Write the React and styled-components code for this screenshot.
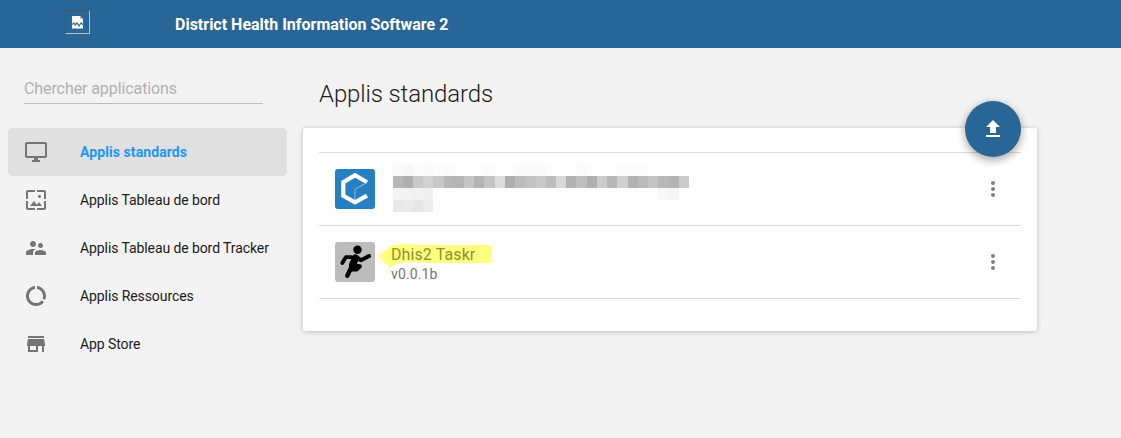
import React from "react";
import styled, { createGlobalStyle } from "styled-components";

const Global = createGlobalStyle`
  * { box-sizing: border-box; }
  body { margin: 0; background: #f3f3f3; font-family: Roboto, "Liberation Sans", sans-serif; color: #212121; }
`;

const Page = styled.div`
  height: 438px;
  overflow: hidden;
  background: #f3f3f3;
`;

const Header = styled.header`
  display: flex;
  height: 48px;
  background: #276696;
  padding-left: 65px;
`;

const Logo = styled.div`
  width: 25px;
  height: 24px;
  margin: 10px 85px 0 0;
  border: 1px solid;
  border-color: #54504e #b4bfc7 #b4bfc7 #54504e;
  svg { display: block; margin: 3px 0 0 4px; }
`;

const Title = styled.div`
  font-size: 16px;
  font-weight: 700;
  line-height: 49px;
  color: #fff;
`;

const Body = styled.div`
  display: flex;
`;

const Sidebar = styled.nav`
  width: 295px;
  padding: 28px 8px 0;
  flex: none;
`;

const Search = styled.input`
  display: block;
  width: 239px;
  height: 28px;
  margin: 0 0 24px 16px;
  padding: 0 0 3px;
  border: 0;
  border-bottom: 1px solid #bdbdbd;
  background: transparent;
  font: 16px Roboto, "Liberation Sans", sans-serif;
  letter-spacing: -0.09px;
  outline: 0;
  &::placeholder { color: #b0b0b0; opacity: 1; }
`;

const NavItem = styled.a`
  display: flex;
  align-items: center;
  gap: 32px;
  height: 48px;
  padding-left: 16px;
  border-radius: 5px;
  font-size: 14px;
  white-space: nowrap;
  font-weight: ${(p) => (p.$active ? 700 : 400)};
  letter-spacing: ${(p) => (p.$active ? "0.08px" : "-0.09px")};
  color: ${(p) => (p.$active ? "#2196f3" : "#212121")};
  background: ${(p) => (p.$active ? "#e0e0e0" : "transparent")};
`;

const Icon = styled.svg`
  display: block;
  width: 24px;
  height: 24px;
  flex: none;
  fill: ${(p) => p.$color || "#757575"};
`;

const Main = styled.main`
  width: 758px;
  padding: 0 16px 0 8px;
`;

const Heading = styled.h1`
  margin: 0;
  height: 80px;
  padding: 32px 0 0 16px;
  font-size: 24px;
  line-height: 29px;
  font-weight: 300;
  letter-spacing: -0.12px;
`;

const Card = styled.section`
  position: relative;
  height: 203px;
  padding: 24px 16px;
  background: #fff;
  border-radius: 2px;
  box-shadow: 0 1px 6px rgba(0, 0, 0, 0.12), 0 1px 4px rgba(0, 0, 0, 0.12);
`;

const UploadButton = styled.button`
  position: absolute;
  top: -27px;
  right: 16px;
  display: flex;
  align-items: center;
  justify-content: center;
  width: 56px;
  height: 56px;
  padding: 0;
  border: 0;
  border-radius: 50%;
  background: #276696;
  box-shadow: 0 3px 10px rgba(0, 0, 0, 0.16), 0 3px 10px rgba(0, 0, 0, 0.23);
`;

const AppList = styled.div`
  border-top: 1px solid #dcdcdc;
`;

const AppRow = styled.div`
  display: flex;
  align-items: center;
  height: 73px;
  padding: 0 16px;
  border-bottom: 1px solid #dcdcdc;
`;

const AppIcon = styled.svg`
  width: 40px;
  height: 40px;
  flex: none;
  border-radius: 3px;
  background: ${(p) => p.$bg};
`;

const AppText = styled.div`
  position: relative;
  flex: 1;
  padding: 4px 0 0 16px;
`;

const AppName = styled.div`
  position: relative;
  font-size: 16px;
  line-height: 19px;
  letter-spacing: 0.1px;
  color: #8f8f2d;
`;

const Version = styled.div`
  position: relative;
  font-size: 14px;
  line-height: 18px;
  letter-spacing: 0.12px;
  margin-top: 1px;
  color: #757575;
`;

const Marker = styled.svg`
  position: absolute;
  left: 2px;
  top: 3px;
  width: 116px;
  height: 26px;
`;

const MenuButton = styled.button`
  display: flex;
  justify-content: center;
  width: 24px;
  padding: 0;
  border: 0;
  background: none;
`;

const Redacted = styled.div`
  width: 326px;
  height: 50px;
  margin: 0 auto 2px 7px;
  padding: 1px 0 0 10.5px;
  background: #fdfdfd;
`;

const MosaicRow = styled.div`
  display: flex;
  height: 12px;
`;

const Cell = styled.span`
  width: 10.22px;
  flex: none;
  background: ${(p) => p.$c};
`;

const icons = {
  desktop: "M21 2H3c-1.1 0-2 .9-2 2v12c0 1.1.9 2 2 2h7v2H8v2h8v-2h-2v-2h7c1.1 0 2-.9 2-2V4c0-1.1-.9-2-2-2zm0 14H3V4h18v12z",
  wallpaper: "M4 4h7V2H4c-1.1 0-2 .9-2 2v7h2V4zm6 9l-4 5h12l-3-4-2.03 2.71L10 13zm7-4.5c0-.83-.67-1.5-1.5-1.5S14 7.67 14 8.5s.67 1.5 1.5 1.5S17 9.33 17 8.5zM20 2h-7v2h7v7h2V4c0-1.1-.9-2-2-2zm0 18h-7v2h7c1.1 0 2-.9 2-2v-7h-2v7zM4 13H2v7c0 1.1.9 2 2 2h7v-2H4v-7z",
  people: "M16.5 12c1.38 0 2.49-1.12 2.49-2.5S17.88 7 16.5 7C15.12 7 14 8.12 14 9.5s1.12 2.5 2.5 2.5zM9 11c1.66 0 2.99-1.34 2.99-3S10.66 5 9 5C7.34 5 6 6.34 6 8s1.34 3 3 3zm7.5 3c-1.83 0-5.5.92-5.5 2.75V19h11v-2.25c0-1.83-3.67-2.75-5.5-2.75zM9 13c-2.33 0-7 1.17-7 3.5V19h7v-2.25c0-.85.33-2.34 2.37-3.47C10.5 13.1 9.66 13 9 13z",
  usage: "M13 2.05v3.03c3.39.49 6 3.39 6 6.92 0 .9-.18 1.75-.48 2.54l2.6 1.53c.56-1.24.88-2.62.88-4.07 0-5.18-3.95-9.45-9-9.95zM12 19c-3.87 0-7-3.13-7-7 0-3.53 2.61-6.43 6-6.92V2.05c-5.06.5-9 4.76-9 9.95 0 5.52 4.47 10 9.99 10 3.31 0 6.24-1.61 8.06-4.09l-2.6-1.53C16.17 17.98 14.21 19 12 19z",
  store: "M20 4H4v2h16V4zm1 10v-2l-1-5H4l-1 5v2h1v6h10v-6h4v6h2v-6h1zm-9 4H6v-4h6v4z",
  upload: "M9 16h6v-6h4l-7-7-7 7h4zm-4 2h14v2H5z",
  more: "M12 8c1.1 0 2-.9 2-2s-.9-2-2-2-2 .9-2 2 .9 2 2 2zm0 2c-1.1 0-2 .9-2 2s.9 2 2 2 2-.9 2-2-.9-2-2-2zm0 6c-1.1 0-2 .9-2 2s.9 2 2 2 2-.9 2-2-.9-2-2-2z",
};

const navItems = [
  ["desktop", "Applis standards"],
  ["wallpaper", "Applis Tableau de bord"],
  ["people", "Applis Tableau de bord Tracker"],
  ["usage", "Applis Ressources"],
  ["store", "App Store"],
];

const mosaic = [
  "fa f7 fc fa fd fb fd fd fd fb fd fd fa fa fa fd fd fd fb fd fd fd fc fc fc fd fd fd fd",
  "b8 af c8 d2 c8 b8 b5 c6 b3 c3 dc af bc c2 c9 bd d8 b3 bf af cb b8 d0 b3 bb c4 b8 b4 cb",
  "f3 f3 f1 ef fd fd fd fd fd fd fd fd fd fd fd fd fd fd fd fd fd fd fd fd fd fd f8 f5 fd",
  "e8 eb e6 ec fd fd fd fd fd fd fd fd fd fd fd fd fd fd fd fd fd fd fd fd fd fd fd fd fd",
].map((row) => row.split(" "));

const Glyph = ({ name, color }) => (
  <Icon viewBox="0 0 24 24" $color={color}>
    <path d={icons[name]} />
  </Icon>
);

const More = () => (
  <MenuButton aria-label="Menu">
    <Glyph name="more" color="#808080" />
  </MenuButton>
);

export default function App() {
  return (
    <Page>
      <Global />
      <Header>
        <Logo>
          <svg width="15" height="16" viewBox="0 0 15 16">
            <path d="M2 2h8l3 3v5l-2-2-2 3-2-3-2 2-1-2-2 2z" fill="#fff" />
            <path d="M10 2v3h3z" fill="#a9b4bd" />
            <path d="M2 11l2-1 1 2 2-2 2 3 2-3 2 1v4H2z" fill="#fff" />
            <path d="M2 14.5h11" stroke="#a9b4bd" />
          </svg>
        </Logo>
        <Title>District Health Information Software 2</Title>
      </Header>
      <Body>
        <Sidebar>
          <Search placeholder="Chercher applications" />
          {navItems.map(([icon, label], i) => (
            <NavItem key={label} $active={i === 0}>
              <Glyph name={icon} />
              {label}
            </NavItem>
          ))}
        </Sidebar>
        <Main>
          <Heading>Applis standards</Heading>
          <Card>
            <AppList>
              <AppRow>
                <AppIcon $bg="#267fc1" viewBox="0 0 40 40">
                  <path d="M32 13.2L20 6.3L8.3 13.1V26.8L20 33.4L32 26.6" fill="none" stroke="#fff" strokeWidth="4.2" />
                  <path d="M31.5 13.8L20 20.2V32" fill="none" stroke="#9ed0f5" strokeWidth="0.8" />
                </AppIcon>
                <Redacted>
                  {mosaic.map((row, y) => (
                    <MosaicRow key={y}>
                      {row.map((c, x) => (
                        <Cell key={x} $c={"#" + c + c + c} />
                      ))}
                    </MosaicRow>
                  ))}
                </Redacted>
                <More />
              </AppRow>
              <AppRow>
                <AppIcon $bg="#bcbcbc" viewBox="0 0 40 40">
                  <circle cx="22.5" cy="7.8" r="4.2" />
                  <g fill="none" stroke="#000" strokeLinecap="round" strokeLinejoin="round">
                    <path d="M7.3 21L10.8 15.2H16.5" strokeWidth="3.8" />
                    <path d="M20.5 16L17.5 23" strokeWidth="7" />
                    <path d="M21 15L26 18.2L34 14" strokeWidth="4" />
                    <path d="M18 23.5L25 24.2L21.5 27.5H16" strokeWidth="4" />
                    <path d="M16 26L12.3 33.7" strokeWidth="4.4" />
                  </g>
                </AppIcon>
                <AppText>
                  <Marker viewBox="0 0 116 26">
                    <path d="M0 12L15 1.5C28-1 34 0 42 1H114V19H52C42 18.5 35 18 29 18.5C20 19 16 20 13 24L8 19Z" fill="#ffff80" />
                  </Marker>
                  <AppName>Dhis2 Taskr</AppName>
                  <Version>v0.0.1b</Version>
                </AppText>
                <More />
              </AppRow>
            </AppList>
            <UploadButton aria-label="Upload">
              <Glyph name="upload" color="#fff" />
            </UploadButton>
          </Card>
        </Main>
      </Body>
    </Page>
  );
}
